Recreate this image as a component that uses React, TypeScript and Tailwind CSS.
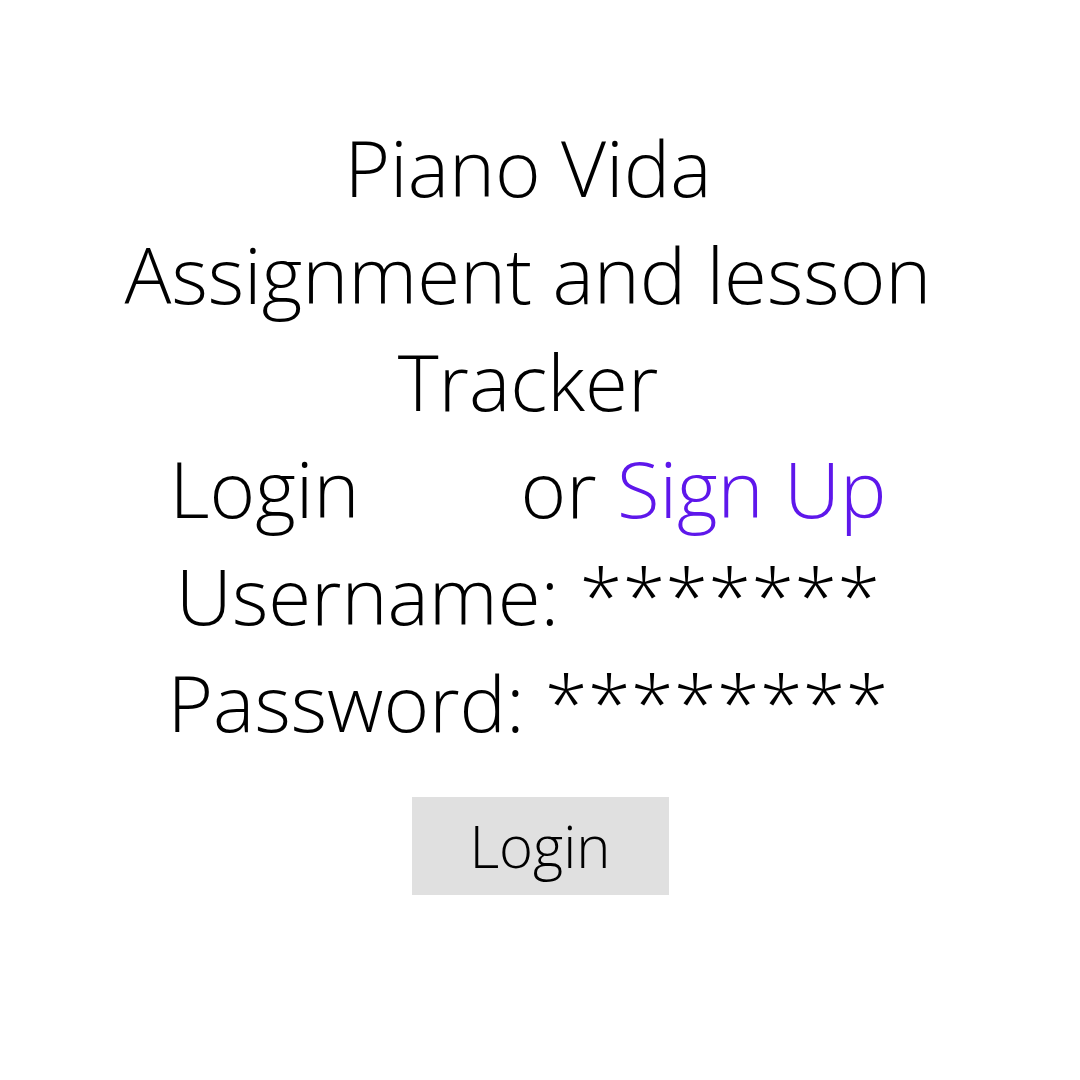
import React from 'react';

const App = () => {
  return (
    <div className="w-[1080px] h-[1080px] bg-white text-black font-light font-['Open_Sans',sans-serif] flex flex-col items-center pt-[114px]">
      {/* Title + credentials block (centred a bit left, like the original text box) */}
      <div className="w-full pr-[24px] text-center text-[78px] leading-[107px]">
        <p>Piano Vida</p>
        <p>Assignment and lesson</p>
        <p>Tracker</p>
        <p>
          Login<span className="inline-block w-[161px]" />or{' '}
          <span className="text-[#5e17eb]">Sign Up</span>
        </p>
        <p>Username: *******</p>
        <p>Password: ********</p>
      </div>

      <button className="mt-[41px] w-[257px] h-[98px] bg-[#e0e0e0] text-[58px] leading-none font-light flex items-center justify-center">
        Login
      </button>
    </div>
  );
};

export default App;
